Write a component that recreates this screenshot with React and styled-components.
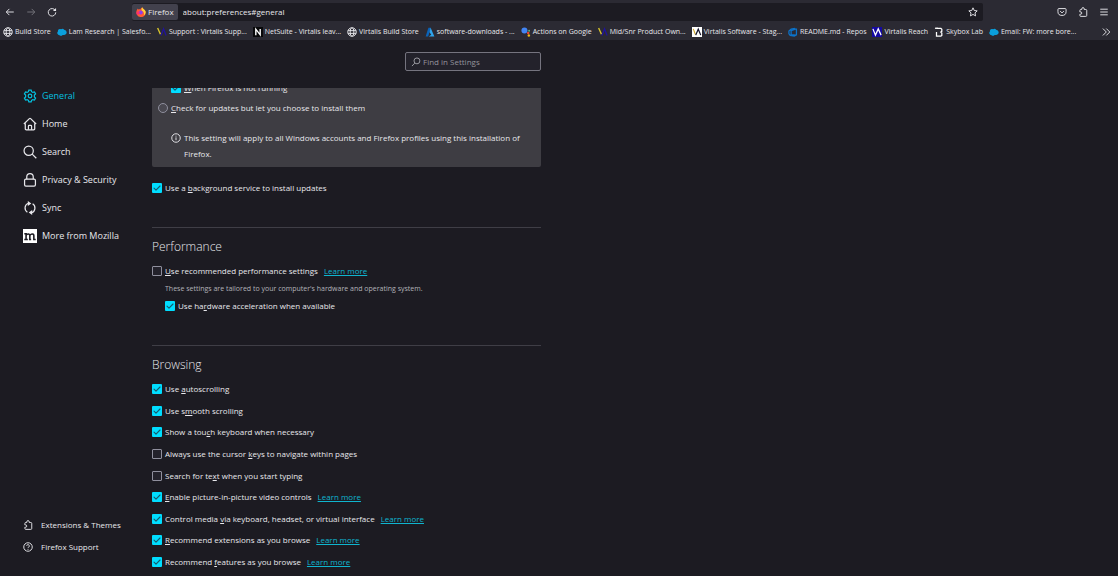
import styled, { createGlobalStyle } from 'styled-components';

const colors = {
  toolbar: '#2b2a33',
  page: '#1c1b22',
  panel: '#3e3d43',
  text: '#e8e8ec',
  muted: '#b3b3b9',
  line: '#3f3e46',
  border: '#8f8f9d',
  accent: '#00ddff',
  link: '#0fb5cf',
};

const tick =
  "url(\"data:image/svg+xml,%3Csvg xmlns='http://www.w3.org/2000/svg' viewBox='0 0 10 10'%3E%3Cpath d='M2 5.2l2 2 4-4.2' fill='none' stroke='%23155a6b' stroke-width='1.1' stroke-linecap='round' stroke-linejoin='round'/%3E%3C/svg%3E\")";

const bookmarks = [
  { label: 'Build Store', icon: 'globe' },
  { label: 'Lam Research | Salesfo...', icon: 'cloud', wide: true },
  { label: 'Support : Virtalis Supp...', icon: 'virtalis', wide: true },
  { label: 'NetSuite - Virtalis leav...', icon: 'netsuite', wide: true },
  { label: 'Virtalis Build Store', icon: 'globe' },
  { label: 'software-downloads - ...', icon: 'azure', wide: true },
  { label: 'Actions on Google', icon: 'assistant' },
  { label: 'Mid/Snr Product Own...', icon: 'virtalis', wide: true },
  { label: 'Virtalis Software - Stag...', icon: 'virtalisLight', wide: true },
  { label: 'README.md - Repos', icon: 'devops' },
  { label: 'Virtalis Reach', icon: 'virtalisBlue' },
  { label: 'Skybox Lab', icon: 'skybox' },
  { label: 'Email: FW: more bore...', icon: 'cloud', wide: true },
];

const categories = [
  { label: 'General', icon: 'gear', active: true },
  { label: 'Home', icon: 'home' },
  { label: 'Search', icon: 'search' },
  { label: 'Privacy & Security', icon: 'lock' },
  { label: 'Sync', icon: 'sync' },
  { label: 'More from Mozilla', icon: 'mozilla' },
];

// [before the access key, access key, after it]
const browsing = [
  { id: 'autoscroll', text: ['Use ', 'a', 'utoscrolling'], checked: true },
  { id: 'smooth', text: ['Use s', 'm', 'ooth scrolling'], checked: true },
  { id: 'touch', text: ['Show a tou', 'c', 'h keyboard when necessary'], checked: true },
  { id: 'cursor', text: ['Always use the cursor ', 'k', 'eys to navigate within pages'] },
  { id: 'typing', text: ['Search for te', 'x', 't when you start typing'] },
  { id: 'pip', text: ['', 'E', 'nable picture-in-picture video controls'], checked: true, more: true },
  { id: 'media', text: ['Control media ', 'v', 'ia keyboard, headset, or virtual interface'], checked: true, more: true },
  { id: 'extensions', text: ['', 'R', 'ecommend extensions as you browse'], checked: true, more: true },
  { id: 'features', text: ['Recommend ', 'f', 'eatures as you browse'], checked: true, more: true },
];

const drawings = {
  back: <path d="M14 8H2.5M7 3L2 8l5 5" />,
  forward: <path d="M2 8h11.5M9 3l5 5-5 5" />,
  reload: (
    <>
      <path d="M13.2 5.5A6 6 0 1 0 14 8.5" />
      <path d="M14.5 1.5v5h-5z" fill="currentColor" stroke="none" />
    </>
  ),
  star: <path d="M8 1.3l2 4.3 4.7.6-3.5 3.2.9 4.8L8 11.9l-4.1 2.3.9-4.8L1.3 6.2 6 5.6z" />,
  pocket: (
    <>
      <path d="M3 2.5h10a1.5 1.5 0 0 1 1.500 1.500v3.500a6.500 6 0 0 1-13 0V4A1.500 1.500 0 0 1 3 2.500z" />
      <path d="M5 6.500l3 3 3-3" />
    </>
  ),
  puzzle: (
    <path d="M6 4V3a2 2 0 0 1 4 0v1h2.500A1.500 1.500 0 0 1 14 5.500v8a1.500 1.500 0 0 1-1.500 1.500h-8A1.500 1.500 0 0 1 3 13.500V11.500h1.200a1.800 1.800 0 0 0 0-3.600H3V5.500A1.500 1.500 0 0 1 4.500 4z" />
  ),
  menu: <path d="M2 3.500h12M2 8h12M2 12.500h12" />,
  chevrons: <path d="M3 2.500L8.500 8 3 13.500M8.500 2.500L14 8l-5.500 5.500" />,
  globe: (
    <>
      <circle cx="8" cy="8" r="6.800" />
      <ellipse cx="8" cy="8" rx="3" ry="6.800" />
      <path d="M1.500 5.800h13M1.500 10.200h13" />
    </>
  ),
  gear: (
    <>
      <path d="M6.700 1.200h2.600l.5 1.900 1.400.8 1.900-.6 1.300 2.300-1.400 1.400v2l1.400 1.400-1.300 2.300-1.900-.6-1.400.8-.5 1.900H6.700l-.5-1.900-1.400-.8-1.900.6-1.300-2.300L3 9V7L1.600 5.600l1.300-2.300 1.900.6 1.400-.8z" />
      <circle cx="8" cy="8" r="2.100" />
    </>
  ),
  home: (
    <>
      <path d="M1 8l6.300-6.200a1 1 0 0 1 1.400 0L15 8" />
      <path d="M2.600 7v6.500a1.200 1.200 0 0 0 1.200 1.200h8.400a1.200 1.200 0 0 0 1.200-1.200V7" />
      <path d="M6.200 14.500v-4a1 1 0 0 1 1-1h1.600a1 1 0 0 1 1 1v4" />
    </>
  ),
  search: (
    <>
      <circle cx="6.500" cy="6.500" r="5.300" />
      <path d="M10.500 10.500l4.700 4.700" />
    </>
  ),
  find: (
    <>
      <circle cx="9.500" cy="6.200" r="4.700" />
      <path d="M6 9.800L1.500 14.500" />
    </>
  ),
  lock: (
    <>
      <rect x="1.800" y="7" width="12.400" height="8" rx="1.500" />
      <path d="M4.300 7V4.500a3.700 3.700 0 0 1 7.400 0V7" />
    </>
  ),
  sync: (
    <>
      <path d="M6.200 2.600A5.700 5.700 0 0 0 5 12.800M9.800 13.400A5.700 5.700 0 0 0 11 3.200" />
      <path d="M5.500 0l4 2.800-4 2.800zM10.500 10.400v5.600l-4-2.800z" fill="currentColor" stroke="none" />
    </>
  ),
  mozilla: (
    <>
      <rect width="16" height="16" fill="#fff" stroke="none" />
      <path
        d="M1.500 5.500h2v6.500M1.500 12h4M3.500 7.500c.8-2 3.800-2.800 4.300-.3V12M6.800 12h2.500M7.800 7.500c.8-2 4.300-2.800 4.600-.1V12h2.100"
        stroke={colors.page}
        strokeWidth="1.800"
      />
    </>
  ),
  info: (
    <>
      <circle cx="8" cy="8" r="6.800" />
      <path d="M8 7v4.500M8 4.300v1.400" />
    </>
  ),
  help: (
    <>
      <circle cx="8" cy="8" r="6.800" />
      <path d="M5.900 6.300a2.100 2.100 0 1 1 3.200 1.800c-.8.500-1.100.8-1.100 1.500M8 11v1.400" />
    </>
  ),
  firefox: (
    <g stroke="none">
      <path d="M15.500 8.500a7.500 7.500 0 1 1-14.700-2C1 4.800 1.800 3.300 3 2.300l.5 1.500L5.500 3l1 1.500c1-2 2-3 3.500-4 .3 1.500 1.300 2 2.500 3 2 1.500 3 3 3 5z" fill="#ff5a36" />
      <path d="M10 .5c.3 1.500 1.300 2 2.500 3 2 1.500 3 3 3 5-.3 2.500-1.500 4-3 5.200 1-2.700.5-6-2.500-7.200-1.500-1-1.500-4 0-6z" fill="#ffd43a" />
      <circle cx="7.600" cy="8.800" r="3.200" fill="#8a3ff0" />
      <path d="M1 8c2-1 4-1 6 .3-1 .2-2 .9-2 2.200L2 13C1 11.500.7 10 1 8z" fill="#ff2f6d" />
    </g>
  ),
  cloud: (
    <path d="M4 13a3.500 3.500 0 0 1-2.500-6A3.400 3.400 0 0 1 6.500 3.500a3.600 3.600 0 0 1 5 .8A4.200 4.200 0 0 1 12.500 12.500a5 5 0 0 1-3.500.3 3.500 3.500 0 0 1-5 .2z" fill="#0a9fdc" stroke="none" />
  ),
  virtalis: (
    <g fill="none" strokeWidth="2.200">
      <path d="M1 1.500l4.500 10" stroke="#d9c52b" />
      <path d="M6.500 13.500L10.500 3l4 10.500" stroke="#20149a" />
    </g>
  ),
  virtalisLight: (
    <>
      <rect width="16" height="16" fill="#fff" stroke="none" />
      <path d="M2 3l3.500 9" stroke="#d0a92b" strokeWidth="1.800" />
      <path d="M6 13l4-9.500 4 9.500" stroke="#16162e" strokeWidth="2" />
    </>
  ),
  virtalisBlue: (
    <>
      <rect width="16" height="16" fill="#1509a0" stroke="none" />
      <path d="M1.500 3l4 10L10 3l4.500 10" stroke="#fff" strokeWidth="2" />
    </>
  ),
  netsuite: (
    <>
      <rect width="16" height="16" fill="#08080a" stroke="none" />
      <path d="M4.500 13V3.500l7 9V3" stroke="#fff" strokeWidth="2.200" />
    </>
  ),
  azure: (
    <g stroke="none">
      <path d="M5.500 1h4L5 15H1z" fill="#0b63b8" />
      <path d="M9 1l6 14H6l4-2.500-2.800-4z" fill="#2fa4ec" />
    </g>
  ),
  assistant: (
    <g stroke="none">
      <circle cx="5.500" cy="5.500" r="4.800" fill="#4285f4" />
      <circle cx="13" cy="6" r="1.500" fill="#5dbb77" />
      <circle cx="11.500" cy="9.700" r="2" fill="#ea4335" />
      <circle cx="12.500" cy="13.500" r="2" fill="#f6b813" />
    </g>
  ),
  devops: (
    <path d="M13.500 2.500v10L10 14.500l-6.500-1-2-2.500V6.500L5 3.500l6-1.500M13 3L5 6v6l8 1" stroke="#0c72c9" strokeWidth="2" />
  ),
  skybox: (
    <>
      <path d="M4 2h7l1.500 1.500V7L11 8l1.500 1.500v4L11 14.500H4V8" stroke="#fff" strokeWidth="2" />
      <path d="M1.500 2H6" stroke="#fff" strokeWidth="2" />
    </>
  ),
};

function Icon({ name, size = 10, weight = 1.5 }) {
  return (
    <Svg $size={size} viewBox="0 0 16 16" strokeWidth={weight} aria-hidden="true">
      {drawings[name]}
    </Svg>
  );
}

function Option({ id, text, checked, more, type = 'checkbox' }) {
  const Box = type === 'radio' ? Radio : Checkbox;
  return (
    <OptionRow>
      <Box type={type} id={id} defaultChecked={checked} />
      <label htmlFor={id}>
        {text[0]}
        <u>{text[1]}</u>
        {text[2]}
      </label>
      {more && <Link href="#learn-more">Learn more</Link>}
    </OptionRow>
  );
}

export default function App() {
  return (
    <>
      <GlobalStyle />
      <Window>
        <NavBar>
          <NavButtons>
            <IconButton aria-label="Back"><Icon name="back" /></IconButton>
            <IconButton aria-label="Forward" disabled><Icon name="forward" /></IconButton>
            <IconButton aria-label="Reload"><Icon name="reload" /></IconButton>
          </NavButtons>
          <UrlBar>
            <Identity><Icon name="firefox" />Firefox</Identity>
            <UrlInput aria-label="Address" defaultValue="about:preferences#general" />
            <IconButton aria-label="Bookmark this page"><Icon name="star" /></IconButton>
          </UrlBar>
          <Tools>
            <IconButton aria-label="Pocket"><Icon name="pocket" /></IconButton>
            <IconButton aria-label="Extensions"><Icon name="puzzle" /></IconButton>
            <IconButton aria-label="Menu"><Icon name="menu" /></IconButton>
          </Tools>
        </NavBar>

        <BookmarkBar>
          {bookmarks.map(({ label, icon, wide }) => (
            <Bookmark key={label} href="#bookmark" $wide={wide}>
              <Icon name={icon} />
              {label}
            </Bookmark>
          ))}
          <Overflow aria-label="More bookmarks"><Icon name="chevrons" /></Overflow>
        </BookmarkBar>

        <Page>
          <Sidebar>
            <Categories>
              {categories.map(({ label, icon, active }) => (
                <Category key={label} href="#category" $active={active}>
                  <Icon name={icon} size={14} weight={1.4} />
                  {label}
                </Category>
              ))}
            </Categories>
            <FooterLinks>
              <FooterLink href="#addons"><Icon name="puzzle" />Extensions &amp; Themes</FooterLink>
              <FooterLink href="#support"><Icon name="help" />Firefox Support</FooterLink>
            </FooterLinks>
          </Sidebar>

          <Main>
            <SearchRow>
              <SearchBox>
                <Icon name="find" weight={1.3} />
                <input type="text" placeholder="Find in Settings" aria-label="Find in Settings" />
              </SearchBox>
            </SearchRow>

            <Scroller>
              <UpdatePanel>
                <Indent>
                  <Option id="not-running" text={['', 'W', 'hen Firefox is not running']} checked />
                </Indent>
                <Option id="choose" type="radio" text={['', 'C', 'heck for updates but let you choose to install them']} />
                <Note>
                  <Icon name="info" />
                  <p>This setting will apply to all Windows accounts and Firefox profiles using this installation of Firefox.</p>
                </Note>
              </UpdatePanel>
              <Option id="background" text={['Use a ', 'b', 'ackground service to install updates']} checked />

              <Section>
                <h2>Performance</h2>
                <Option id="recommended" text={['', 'U', 'se recommended performance settings']} more />
                <Description>These settings are tailored to your computer's hardware and operating system.</Description>
                <Indent>
                  <Option id="hardware" text={['Use ha', 'r', 'dware acceleration when available']} checked />
                </Indent>
              </Section>

              <Section>
                <h2>Browsing</h2>
                <OptionList>
                  {browsing.map((option) => (
                    <Option key={option.id} {...option} />
                  ))}
                </OptionList>
              </Section>
            </Scroller>
          </Main>
        </Page>
      </Window>
    </>
  );
}

const GlobalStyle = createGlobalStyle`
  * {
    box-sizing: border-box;
  }

  body {
    margin: 0;
    background: ${colors.page};
    color: ${colors.text};
    font: 8px/16px 'Open Sans', 'Noto Sans', sans-serif;
  }

  button, input {
    font: inherit;
    color: inherit;
  }

  h2, p {
    margin: 0;
  }
`;

const Svg = styled.svg`
  width: ${props => props.$size}px;
  height: ${props => props.$size}px;
  flex: none;
  fill: none;
  stroke: currentColor;
`;

const Window = styled.div`
  display: flex;
  flex-direction: column;
  height: 100vh;
  overflow: hidden;
`;

const NavBar = styled.header`
  display: flex;
  align-items: center;
  height: 24px;
  flex: none;
  background: ${colors.toolbar};
`;

const IconButton = styled.button`
  display: flex;
  padding: 0;
  border: none;
  background: none;

  &:disabled {
    opacity: 0.4;
  }
`;

const NavButtons = styled.div`
  display: flex;
  gap: 11px;
  width: 132px;
  padding-left: 5px;
`;

const UrlBar = styled.div`
  display: flex;
  align-items: center;
  flex: 1;
  height: 18px;
  padding-right: 5px;
  border-radius: 2px;
  background: ${colors.page};
`;

const Identity = styled.span`
  display: flex;
  align-items: center;
  gap: 2px;
  height: 16px;
  padding: 0 4px;
  border-radius: 2px;
  background: #42414d;
`;

const UrlInput = styled.input`
  flex: 1;
  min-width: 0;
  padding: 0 5px;
  border: none;
  outline: none;
  background: none;
`;

const Tools = styled.div`
  display: flex;
  gap: 11px;
  width: 135px;
  padding-right: 9px;
  justify-content: flex-end;
`;

const BookmarkBar = styled.nav`
  display: flex;
  align-items: center;
  height: 16px;
  flex: none;
  padding: 0 7px 0 3px;
  overflow: hidden;
  background: ${colors.toolbar};
  font-size: 7px;
`;

const Bookmark = styled.a`
  display: flex;
  align-items: center;
  gap: 2px;
  flex: 0 0 ${props => props.$wide ? '94px' : 'auto'};
  padding-right: 6px;
  color: inherit;
  text-decoration: none;
  white-space: nowrap;
`;

const Overflow = styled(IconButton)`
  margin-left: auto;
`;

const Page = styled.div`
  display: flex;
  flex: 1;
  min-height: 0;
`;

const Sidebar = styled.aside`
  display: flex;
  flex-direction: column;
  justify-content: space-between;
  flex: 0 0 152px;
  padding: 42px 0 18px 23px;
`;

const Categories = styled.nav`
  display: flex;
  flex-direction: column;
  font-size: 9px;
`;

const Category = styled.a`
  display: flex;
  align-items: center;
  gap: 5px;
  height: 28px;
  color: ${props => props.$active ? colors.accent : 'inherit'};
  opacity: ${props => props.$active ? 0.85 : 1};
  text-decoration: none;
`;

const FooterLinks = styled.nav`
  display: flex;
  flex-direction: column;
`;

const FooterLink = styled.a`
  display: flex;
  align-items: center;
  gap: 8px;
  height: 22px;
  color: inherit;
  text-decoration: none;
`;

const Main = styled.main`
  display: flex;
  flex-direction: column;
  flex: 1;
  max-width: 389px;
`;

const SearchRow = styled.div`
  display: flex;
  justify-content: flex-end;
  padding: 12px 0 17px;
`;

const SearchBox = styled.div`
  display: flex;
  align-items: center;
  gap: 2px;
  width: 136px;
  height: 19px;
  padding: 0 5px;
  border: 1px solid #75747f;
  border-radius: 2px;
  background: #23222b;
  color: ${colors.muted};

  input {
    flex: 1;
    min-width: 0;
    padding: 0;
    border: none;
    outline: none;
    background: none;
  }

  input::placeholder {
    color: #94939c;
  }
`;

const Scroller = styled.div`
  flex: 1;
  min-height: 0;
  overflow: hidden;
`;

const OptionRow = styled.div`
  display: flex;
  align-items: center;
  gap: 3px;
  height: 16px;
  white-space: nowrap;

  u {
    text-underline-offset: 1px;
  }
`;

const Checkbox = styled.input`
  appearance: none;
  flex: none;
  width: 10px;
  height: 10px;
  margin: 0;
  border: 1px solid ${colors.border};
  border-radius: 1px;
  background: #23222b;

  &:checked {
    border: none;
    background: ${colors.accent} ${tick};
  }
`;

const Radio = styled(Checkbox)`
  border-radius: 50%;
  background: #4a4951;
`;

const Link = styled.a`
  margin-left: 3px;
  color: ${colors.link};
`;

const Indent = styled.div`
  padding-left: 13px;
`;

const UpdatePanel = styled.div`
  display: flex;
  flex-direction: column;
  gap: 4px;
  margin: -8px 0 13px;
  padding: 0 6px 5px;
  border-radius: 2px;
  background: ${colors.panel};
`;

const Note = styled.div`
  display: flex;
  gap: 3px;
  padding: 10px 8px 0 13px;

  svg {
    margin-top: 3px;
  }
`;

const Section = styled.section`
  margin-top: 31px;
  padding-top: 9px;
  border-top: 1px solid ${colors.line};

  h2 {
    margin-bottom: 6px;
    font-size: 12px;
    font-weight: 300;
    line-height: 20px;
  }
`;

const Description = styled.p`
  margin: 2px 0 1px;
  padding-left: 13px;
  color: ${colors.muted};
  font-size: 7px;
`;

const OptionList = styled.div`
  display: flex;
  flex-direction: column;
  justify-content: space-between;
  height: 189px;
`;
